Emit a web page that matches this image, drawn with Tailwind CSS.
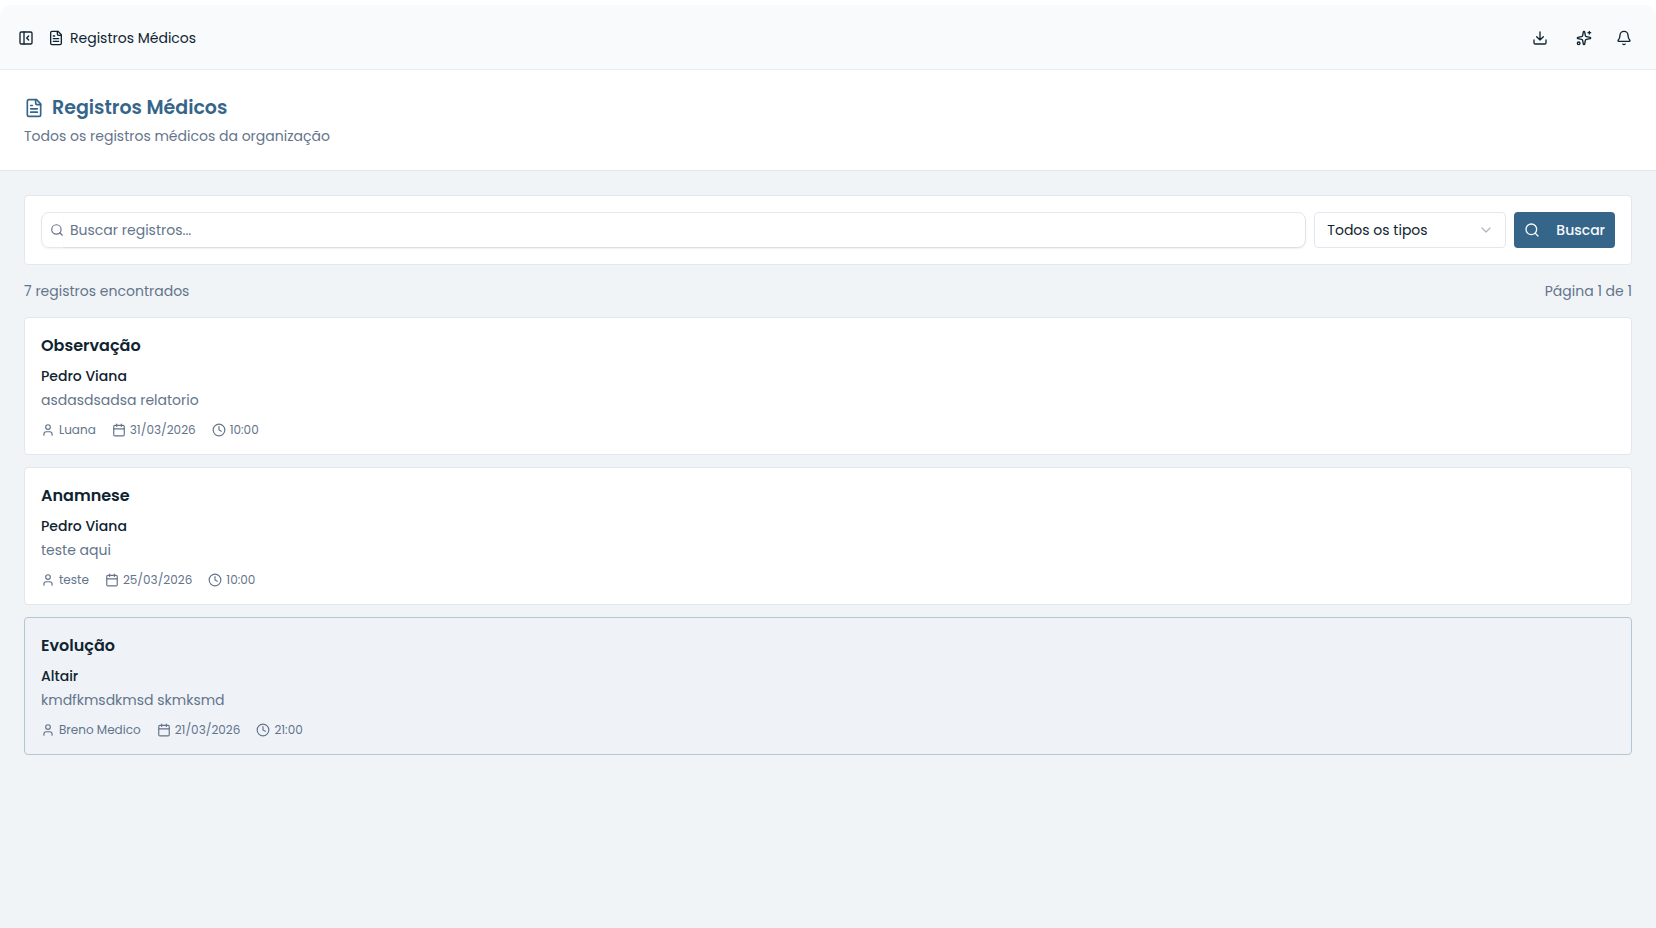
<!DOCTYPE html>
<html lang="pt-BR">
<head>
<meta charset="utf-8">
<meta name="viewport" content="width=device-width, initial-scale=1">
<title>Registros Médicos</title>
<script src="https://cdn.jsdelivr.net/npm/@tailwindcss/browser@4"></script>
</head>
<body class="flex min-h-screen flex-col bg-white pt-[5px] font-[Poppins,Inter,sans-serif] text-sm text-[#0f2330]">
<svg class="hidden" aria-hidden="true">
  <symbol id="file" viewBox="0 0 24 24"><path d="M15 2H6a2 2 0 0 0-2 2v16a2 2 0 0 0 2 2h12a2 2 0 0 0 2-2V7Z"/><path d="M14 2v4a2 2 0 0 0 2 2h4M10 9H8M16 13H8M16 17H8"/></symbol>
  <symbol id="panel" viewBox="0 0 24 24"><rect x="3" y="3" width="18" height="18" rx="2"/><path d="M9 3v18M16 15l-3-3 3-3"/></symbol>
  <symbol id="download" viewBox="0 0 24 24"><path d="M21 15v4a2 2 0 0 1-2 2H5a2 2 0 0 1-2-2v-4M7 10l5 5 5-5M12 15V3"/></symbol>
  <symbol id="sparkles" viewBox="0 0 24 24"><path d="M11.017 2.814a1 1 0 0 1 1.966 0l1.051 5.558a2 2 0 0 0 1.594 1.594l5.558 1.051a1 1 0 0 1 0 1.966l-5.558 1.051a2 2 0 0 0-1.594 1.594l-1.051 5.558a1 1 0 0 1-1.966 0l-1.051-5.558a2 2 0 0 0-1.594-1.594l-5.558-1.051a1 1 0 0 1 0-1.966l5.558-1.051a2 2 0 0 0 1.594-1.594zM20 2v4M22 4h-4"/><circle cx="4" cy="20" r="2"/></symbol>
  <symbol id="bell" viewBox="0 0 24 24"><path d="M10.268 21a2 2 0 0 0 3.464 0M3.262 15.326A1 1 0 0 0 4 17h16a1 1 0 0 0 .74-1.673C19.41 13.956 18 12.499 18 8A6 6 0 0 0 6 8c0 4.499-1.411 5.956-2.738 7.326"/></symbol>
  <symbol id="search" viewBox="0 0 24 24"><circle cx="11" cy="11" r="8"/><path d="m21 21-4.34-4.34"/></symbol>
  <symbol id="chevron" viewBox="0 0 24 24"><path d="m6 9 6 6 6-6"/></symbol>
  <symbol id="user" viewBox="0 0 24 24"><path d="M19 21v-2a4 4 0 0 0-4-4H9a4 4 0 0 0-4 4v2"/><circle cx="12" cy="7" r="4"/></symbol>
  <symbol id="calendar" viewBox="0 0 24 24"><path d="M8 2v4M16 2v4M3 10h18"/><rect x="3" y="4" width="18" height="18" rx="2"/></symbol>
  <symbol id="clock" viewBox="0 0 24 24"><circle cx="12" cy="12" r="10"/><path d="M12 6v6l4 2"/></symbol>
</svg>

<header class="flex h-[65px] shrink-0 items-center justify-between rounded-t-xl border-b border-[#e8edf1] bg-[#f8fafc] pt-0.5 pr-[18px] pl-3">
  <div class="flex items-center">
    <button type="button" aria-label="Recolher menu" class="flex size-7 items-center justify-center"><svg class="size-4 fill-none stroke-current stroke-2 [stroke-linecap:round] [stroke-linejoin:round]"><use href="#panel"/></svg></button>
    <nav class="ml-2 flex items-center gap-1.5" aria-label="Trilha">
      <svg class="size-4 fill-none stroke-current stroke-2 [stroke-linecap:round] [stroke-linejoin:round]"><use href="#file"/></svg>
      <span>Registros Médicos</span>
    </nav>
  </div>
  <div class="flex items-center gap-2">
    <button type="button" aria-label="Baixar" class="flex size-9 items-center justify-center"><svg class="size-4 fill-none stroke-current stroke-2 [stroke-linecap:round] [stroke-linejoin:round]"><use href="#download"/></svg></button>
    <button type="button" aria-label="Assistente" class="flex size-9 items-center justify-center"><svg class="size-4 fill-none stroke-current stroke-2 [stroke-linecap:round] [stroke-linejoin:round]"><use href="#sparkles"/></svg></button>
    <button type="button" aria-label="Notificações" class="flex size-7 items-center justify-center"><svg class="size-4 fill-none stroke-current stroke-2 [stroke-linecap:round] [stroke-linejoin:round]"><use href="#bell"/></svg></button>
  </div>
</header>

<section class="border-b border-[#e2e8f0] bg-white p-6">
  <h1 class="flex items-center gap-2 text-[19px] leading-7 font-semibold text-[#36658a]">
    <svg class="size-5 fill-none stroke-current stroke-2 [stroke-linecap:round] [stroke-linejoin:round]"><use href="#file"/></svg>
    Registros Médicos
  </h1>
  <p class="mt-1 text-[#64748b]">Todos os registros médicos da organização</p>
</section>

<main class="flex grow flex-col gap-4 bg-[#f0f4f7] p-6">
  <form class="flex gap-2 rounded border border-[#e2e8f0] bg-white p-4">
    <label class="flex h-9 grow items-center rounded-lg border border-[#e2e8f0] pl-2 text-[#64748b] shadow-xs">
      <svg class="size-3.5 shrink-0 fill-none stroke-current stroke-2 [stroke-linecap:round] [stroke-linejoin:round]"><use href="#search"/></svg>
      <input type="search" aria-label="Buscar registros" placeholder="Buscar registros..." class="h-full w-full rounded-r-lg pl-1.5 text-[#0f2330] shadow-xs outline-none placeholder:text-[#64748b]">
    </label>
    <div class="grid w-48 shrink-0 items-center">
      <select aria-label="Tipo de registro" class="col-start-1 row-start-1 h-9 appearance-none rounded border border-[#e2e8f0] bg-white px-3"><option>Todos os tipos</option></select>
      <svg class="pointer-events-none col-start-1 row-start-1 mr-3 size-4 justify-self-end fill-none stroke-[#64748b] stroke-2 opacity-50 [stroke-linecap:round] [stroke-linejoin:round]"><use href="#chevron"/></svg>
    </div>
    <button type="submit" class="flex h-9 shrink-0 items-center gap-4 rounded bg-[#36658a] px-2.5 font-medium text-[#f8fafc]"><svg class="size-4 fill-none stroke-current stroke-2 [stroke-linecap:round] [stroke-linejoin:round]"><use href="#search"/></svg>Buscar</button>
  </form>

  <div class="flex justify-between text-[#64748b]"><p>7 registros encontrados</p><p>Página 1 de 1</p></div>

  <div class="flex flex-col gap-3">
    <article class="rounded border border-[#e2e8f0] bg-white p-4">
      <h2 class="text-base leading-6 font-semibold">Observação</h2>
      <p class="mt-2 font-medium">Pedro Viana</p>
      <p class="mt-1 text-[#64748b]">asdasdsadsa relatorio</p>
      <div class="mt-3 flex gap-4 text-xs text-[#64748b]">
        <span class="flex items-center gap-1"><svg class="size-3.5 fill-none stroke-current stroke-2 [stroke-linecap:round] [stroke-linejoin:round]"><use href="#user"/></svg>Luana</span>
        <span class="flex items-center gap-1"><svg class="size-3.5 fill-none stroke-current stroke-2 [stroke-linecap:round] [stroke-linejoin:round]"><use href="#calendar"/></svg>31/03/2026</span>
        <span class="flex items-center gap-1"><svg class="size-3.5 fill-none stroke-current stroke-2 [stroke-linecap:round] [stroke-linejoin:round]"><use href="#clock"/></svg>10:00</span>
      </div>
    </article>
    <article class="rounded border border-[#e2e8f0] bg-white p-4">
      <h2 class="text-base leading-6 font-semibold">Anamnese</h2>
      <p class="mt-2 font-medium">Pedro Viana</p>
      <p class="mt-1 text-[#64748b]">teste aqui</p>
      <div class="mt-3 flex gap-4 text-xs text-[#64748b]">
        <span class="flex items-center gap-1"><svg class="size-3.5 fill-none stroke-current stroke-2 [stroke-linecap:round] [stroke-linejoin:round]"><use href="#user"/></svg>teste</span>
        <span class="flex items-center gap-1"><svg class="size-3.5 fill-none stroke-current stroke-2 [stroke-linecap:round] [stroke-linejoin:round]"><use href="#calendar"/></svg>25/03/2026</span>
        <span class="flex items-center gap-1"><svg class="size-3.5 fill-none stroke-current stroke-2 [stroke-linecap:round] [stroke-linejoin:round]"><use href="#clock"/></svg>10:00</span>
      </div>
    </article>
    <article class="rounded border border-[#b4c6d4] bg-[#eff3f8] p-4">
      <h2 class="text-base leading-6 font-semibold">Evolução</h2>
      <p class="mt-2 font-medium">Altair</p>
      <p class="mt-1 text-[#64748b]">kmdfkmsdkmsd skmksmd</p>
      <div class="mt-3 flex gap-4 text-xs text-[#64748b]">
        <span class="flex items-center gap-1"><svg class="size-3.5 fill-none stroke-current stroke-2 [stroke-linecap:round] [stroke-linejoin:round]"><use href="#user"/></svg>Breno Medico</span>
        <span class="flex items-center gap-1"><svg class="size-3.5 fill-none stroke-current stroke-2 [stroke-linecap:round] [stroke-linejoin:round]"><use href="#calendar"/></svg>21/03/2026</span>
        <span class="flex items-center gap-1"><svg class="size-3.5 fill-none stroke-current stroke-2 [stroke-linecap:round] [stroke-linejoin:round]"><use href="#clock"/></svg>21:00</span>
      </div>
    </article>
  </div>
</main>
</body>
</html>
